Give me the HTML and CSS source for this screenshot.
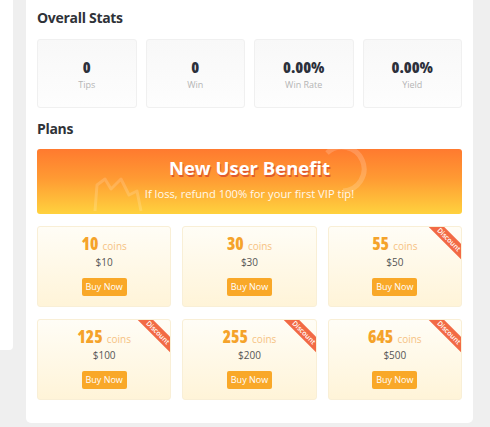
FILE: index.html
```html
<!DOCTYPE html>
<html lang="en">
<head>
<meta charset="utf-8">
<title>Stats and Plans</title>
<link rel="stylesheet" href="styles.css">
</head>
<body>
<div class="layout">
  <aside class="side"></aside>
  <main class="card">
    <h2 class="title">Overall Stats</h2>
    <div class="stats">
      <div class="stat"><div class="stat-num">0</div><div class="stat-label">Tips</div></div>
      <div class="stat"><div class="stat-num">0</div><div class="stat-label">Win</div></div>
      <div class="stat"><div class="stat-num">0.00%</div><div class="stat-label">Win Rate</div></div>
      <div class="stat"><div class="stat-num">0.00%</div><div class="stat-label">Yield</div></div>
    </div>
    <h2 class="title plans-title">Plans</h2>
    <div class="banner">
      <svg class="banner-deco" width="425" height="65" viewBox="0 0 425 65" aria-hidden="true">
        <path d="M290 4 A22 22 0 1 1 306 42" fill="none" stroke="#fff" stroke-width="5" opacity="0.18"/>
        <path d="M58 62 L60 36 L68 30 L74 40 L84 30 L92 46 L100 42 L104 62" fill="none" stroke="#fff" stroke-width="3" stroke-linejoin="round" opacity="0.16"/>
      </svg>
      <div class="banner-title">New User Benefit</div>
      <div class="banner-sub">If loss, refund 100% for your first VIP tip!</div>
    </div>
    <div class="plans">
      <div class="plan">
        <div class="plan-amt"><span class="plan-num">10</span> <span class="plan-unit">coins</span></div>
        <div class="plan-price">$10</div>
        <button class="buy">Buy Now</button>
      </div>
      <div class="plan">
        <div class="plan-amt"><span class="plan-num">30</span> <span class="plan-unit">coins</span></div>
        <div class="plan-price">$30</div>
        <button class="buy">Buy Now</button>
      </div>
      <div class="plan">
        <div class="ribbon">Discount</div>
        <div class="plan-amt"><span class="plan-num">55</span> <span class="plan-unit">coins</span></div>
        <div class="plan-price">$50</div>
        <button class="buy">Buy Now</button>
      </div>
      <div class="plan">
        <div class="ribbon">Discount</div>
        <div class="plan-amt"><span class="plan-num">125</span> <span class="plan-unit">coins</span></div>
        <div class="plan-price">$100</div>
        <button class="buy">Buy Now</button>
      </div>
      <div class="plan">
        <div class="ribbon">Discount</div>
        <div class="plan-amt"><span class="plan-num">255</span> <span class="plan-unit">coins</span></div>
        <div class="plan-price">$200</div>
        <button class="buy">Buy Now</button>
      </div>
      <div class="plan">
        <div class="ribbon">Discount</div>
        <div class="plan-amt"><span class="plan-num">645</span> <span class="plan-unit">coins</span></div>
        <div class="plan-price">$500</div>
        <button class="buy">Buy Now</button>
      </div>
    </div>
  </main>
</div>
</body>
</html>
```
FILE: styles.css
```css
* { box-sizing: border-box; }
html, body { margin: 0; padding: 0; }
body {
  background: #efefef;
  font-family: "Open Sans", "Noto Sans", sans-serif;
  color: #333;
  width: 490px;
  height: 427px;
  overflow: hidden;
}
.layout {
  display: flex;
  align-items: flex-start;
  gap: 13px;
}
.side {
  width: 13px;
  height: 350px;
  background: #fff;
  border-bottom-right-radius: 4px;
}
.card {
  width: 447px;
  background: #fff;
  padding: 8px 11px 23px;
  border-bottom-left-radius: 5px;
  border-bottom-right-radius: 5px;
}
.title {
  margin: 0;
  font-size: 14px;
  letter-spacing: -0.3px;
  line-height: 20px;
  font-weight: 700;
  color: #2f3238;
}
.stats {
  margin-top: 11px;
  display: grid;
  grid-template-columns: repeat(4, 1fr);
  gap: 9px;
}
.stat {
  height: 69px;
  border: 1px solid #f0f0f0;
  border-radius: 3px;
  background: linear-gradient(#f8f8f8, #fdfdfd);
  text-align: center;
  padding-top: 17px;
}
.stat-num {
  font-family: "Open Sans", sans-serif;
  font-stretch: 75%;
  font-weight: 800;
  font-size: 16px;
  line-height: 20px;
  color: #2c303b;
}
.stat-label {
  font-size: 9px;
  line-height: 14px;
  margin-top: 1px;
  color: #b5b5b5;
}
.plans-title { margin-top: 11px; }
.banner {
  position: relative;
  margin-top: 10px;
  height: 65px;
  border-radius: 3px;
  background: linear-gradient(#ff7a2f 0%, #ff9a33 45%, #ffd23e 100%);
  text-align: center;
  color: #fff;
  padding-top: 6px;
  overflow: hidden;
}
.banner-deco {
  position: absolute;
  left: 0;
  top: 0;
}
.banner-title {
  position: relative;
  font-size: 18.5px;
  line-height: 26px;
  font-weight: 700;
  text-shadow: 1px 2px 0 #e25a2c;
}
.banner-sub {
  position: relative;
  font-size: 11.2px;
  line-height: 16px;
  margin-top: 5px;
  color: #fff8ea;
}
.plans {
  margin-top: 12px;
  display: grid;
  grid-template-columns: repeat(3, 1fr);
  gap: 12px 11px;
}
.plan {
  position: relative;
  overflow: hidden;
  height: 81px;
  border: 1px solid #f9efd6;
  border-radius: 3px;
  background: linear-gradient(#fffdf6, #fff4d8);
  text-align: center;
  padding-top: 7px;
}
.plan-amt {
  line-height: 20px;
  height: 20px;
}
.plan-num {
  font-family: "Open Sans", sans-serif;
  font-stretch: 75%;
  font-weight: 800;
  font-size: 17px;
  color: #f5a32a;
}
.plan-unit {
  font-size: 10px;
  color: #f6c283;
}
.plan-price {
  font-size: 10px;
  line-height: 14px;
  margin-top: 1px;
  color: #555;
}
.buy {
  margin-top: 9px;
  width: 45px;
  height: 18px;
  padding: 0;
  border: none;
  border-radius: 2px;
  background: #f9a828;
  color: #fff;
  font-family: "Open Sans", sans-serif;
  font-size: 9px;
  line-height: 18px;
}
.ribbon {
  position: absolute;
  top: 7px;
  right: -13px;
  width: 50px;
  height: 11px;
  background: #f26a45;
  color: #fff;
  font-size: 7px;
  line-height: 11px;
  font-weight: 600;
  text-align: center;
  transform: rotate(45deg);
}
```
